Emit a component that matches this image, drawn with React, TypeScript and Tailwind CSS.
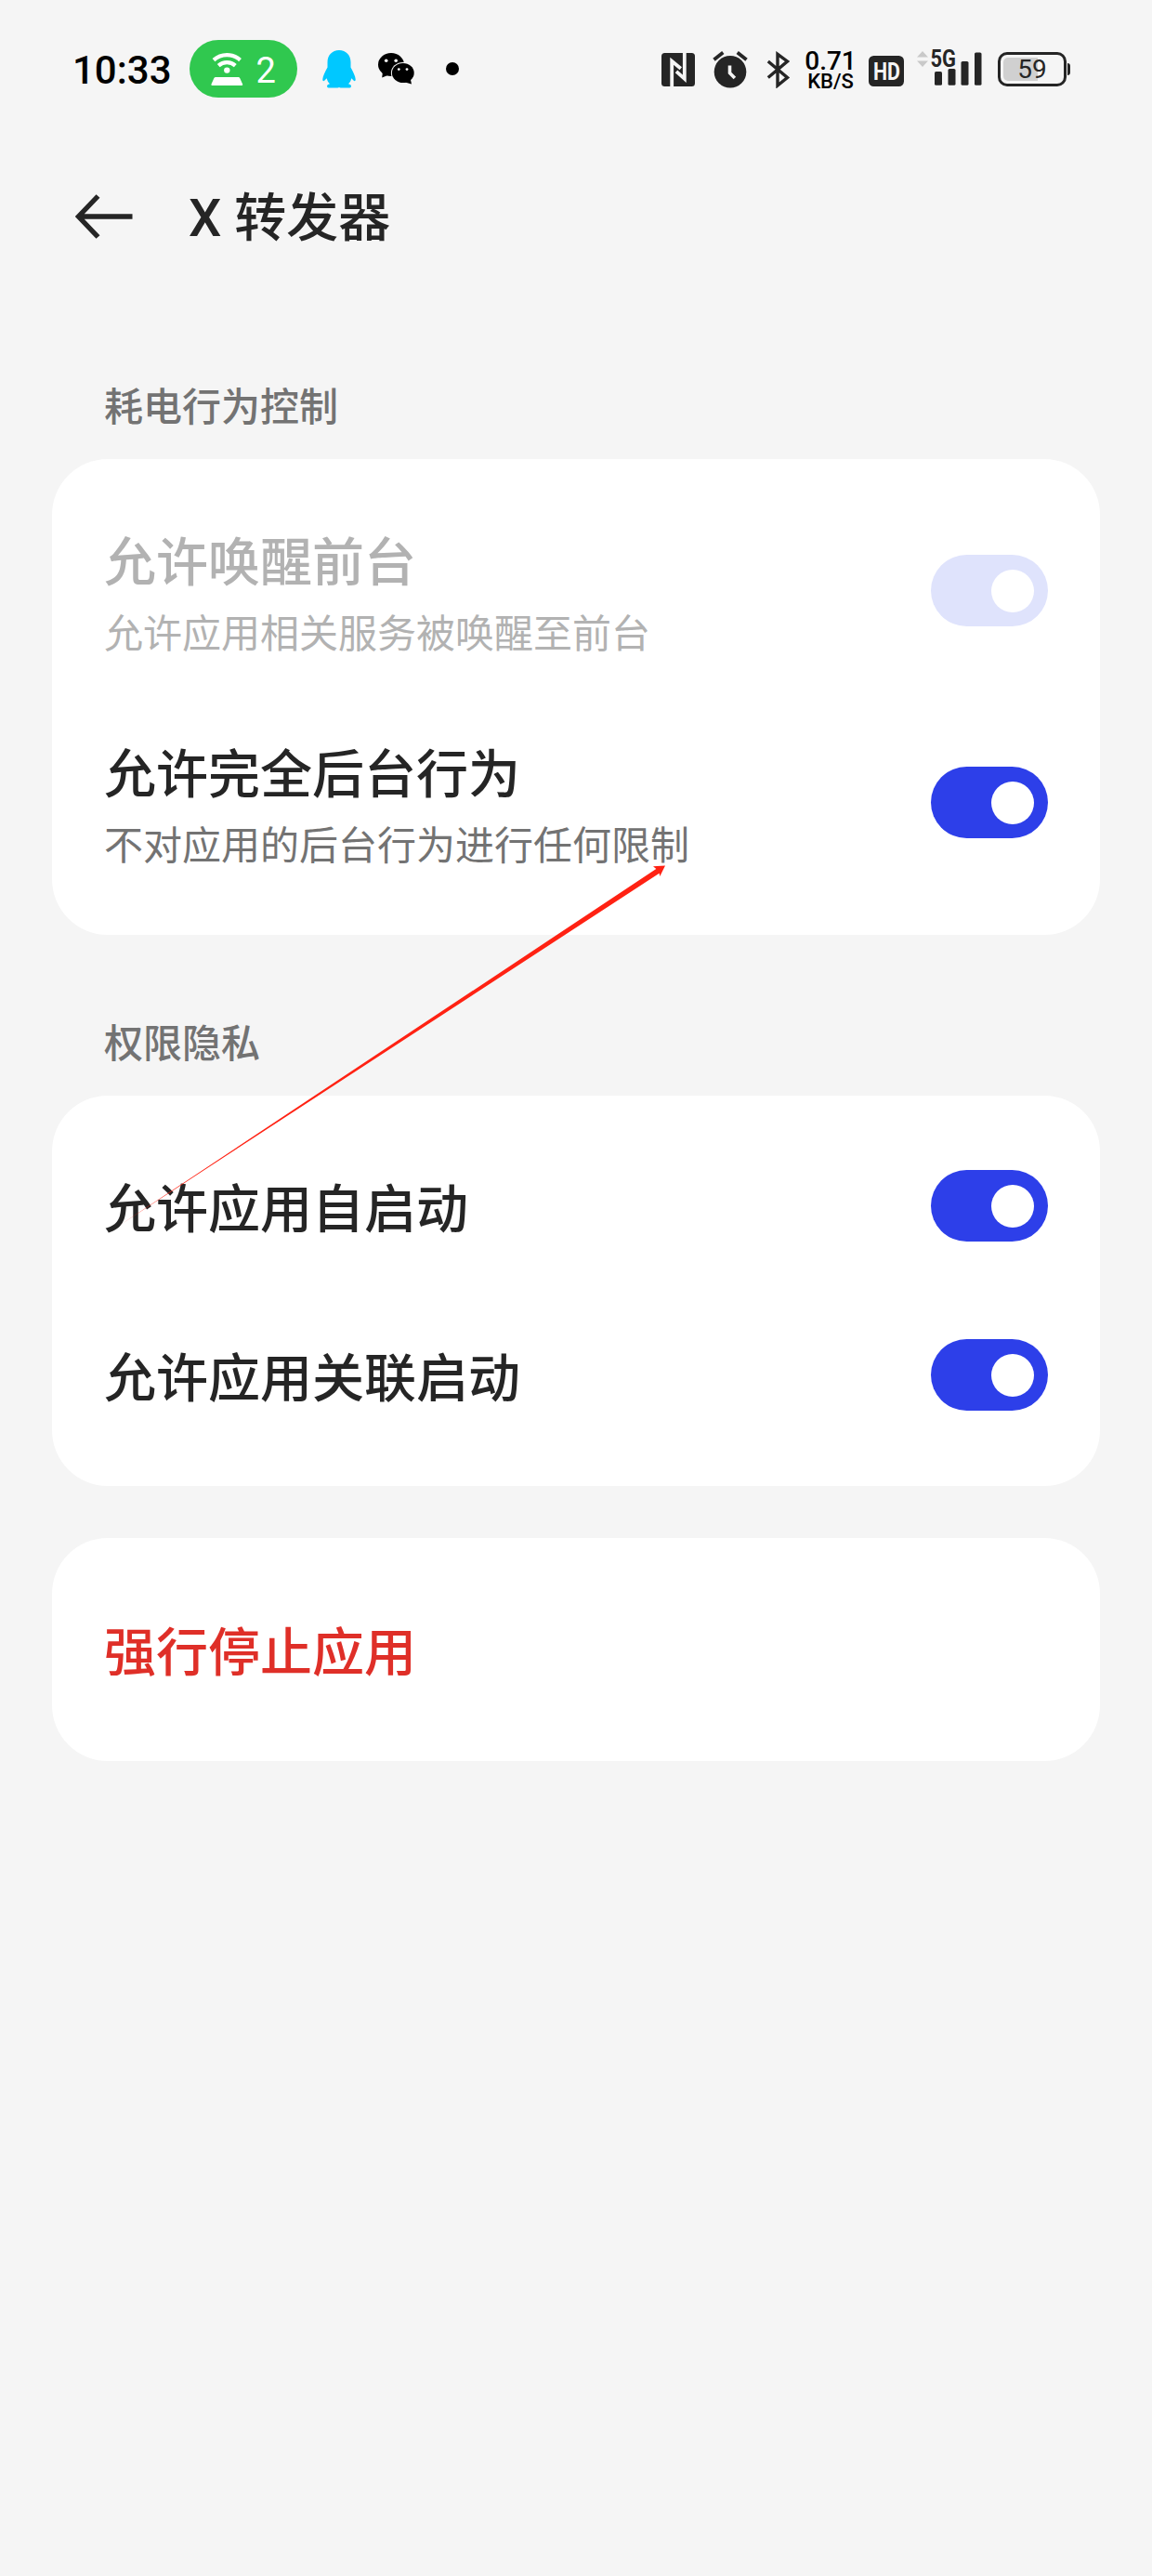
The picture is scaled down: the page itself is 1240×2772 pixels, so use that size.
import { useState } from "react";

type SettingItem = {
  id: string;
  title: string;
  desc?: string;
  disabled?: boolean;
};

const powerItems: SettingItem[] = [
  { id: "wake", title: "允许唤醒前台", desc: "允许应用相关服务被唤醒至前台", disabled: true },
  { id: "background", title: "允许完全后台行为", desc: "不对应用的后台行为进行任何限制" },
];

const privacyItems: SettingItem[] = [
  { id: "autostart", title: "允许应用自启动" },
  { id: "linked", title: "允许应用关联启动" },
];

function HotspotPill() {
  return (
    <div className="ml-[19px] flex h-[62px] w-[116px] items-center rounded-full bg-[#30c84f] pl-[23px] text-white">
      <svg width="35" height="38" viewBox="0 0 35 38" className="shrink-0">
        <g fill="none" stroke="white" strokeWidth="4.2">
          <path d="M3 9.6A21 21 0 0 1 31.5 9.6" />
          <path d="M8.2 15.6A13.5 13.5 0 0 1 26.3 15.6" />
        </g>
        <circle cx="17.3" cy="20.6" r="3.2" fill="white" />
        <path d="M5.2 28h24.2q1.4 0 1.900 1.200l2.800 6.400q.5 1.400-1 1.400H1.500q-1.500 0-1-1.400l2.800-6.400Q3.800 28 5.200 28z" fill="white" />
      </svg>
      <span className="ml-[14px] pt-[3px] text-[38px] leading-none">2</span>
    </div>
  );
}

function QQIcon() {
  return (
    <svg width="36" height="41" viewBox="0 0 36 41" className="ml-[27px]" fill="#00c8ff">
      <path d="M18 0C25.500 0 30.500 5.500 30.500 13v5.500c2.600 4.600 5 9.500 5.200 12.800.1 2-.9 2.600-2.200 1.300l-2.200-2.300c-.6 2.600-1.700 4.500-3.300 6 2 .6 3 1.300 3 2.500 0 1.400-1 1.700-3 1.700H19.500L18 40l-1.500.5H8c-2 0-3-.3-3-1.700 0-1.200 1-1.900 3-2.500-1.600-1.500-2.700-3.400-3.300-6l-2.200 2.300C1.200 33.900.2 33.300.3 31.300c.2-3.300 2.600-8.200 5.200-12.800V13C5.500 5.500 10.500 0 18 0z" />
    </svg>
  );
}

function WeChatIcon() {
  return (
    <svg width="40" height="34" viewBox="0 0 40 34" className="ml-6">
      <ellipse cx="14" cy="12.500" rx="14" ry="12.500" />
      <path d="M5 20l-.8 6.500 7.500-3z" />
      <circle cx="8.700" cy="8.300" r="1.800" fill="#f5f5f5" />
      <circle cx="19.200" cy="8.300" r="1.800" fill="#f5f5f5" />
      <ellipse cx="26.800" cy="21.500" rx="12.900" ry="11.500" fill="#f5f5f5" />
      <ellipse cx="26.800" cy="21.500" rx="11.900" ry="10.500" />
      <path d="M29 31.500l7 2-1.200-5.500z" />
      <circle cx="22.300" cy="17.600" r="1.400" fill="#f5f5f5" />
      <circle cx="31" cy="17.600" r="1.400" fill="#f5f5f5" />
    </svg>
  );
}

function NfcIcon() {
  return (
    <svg width="36" height="36" viewBox="0 0 36 36" className="mt-[2px]">
      <rect width="36" height="36" rx="3.500" fill="#252525" />
      <g fill="none" stroke="#f5f5f5" strokeWidth="3.800">
        <path d="M11.200 36V8.800l9.600 8" />
        <path d="M24.800 0V27.800l-8.800-8" />
      </g>
    </svg>
  );
}

function AlarmIcon() {
  return (
    <svg width="38" height="40" viewBox="0 0 38 40" className="mt-[2px] ml-[19px]">
      <circle cx="19" cy="22.300" r="17.300" fill="#252525" />
      <g fill="none" stroke="#252525" strokeWidth="3.800">
        <path d="M1.500 9.200L11.300 1.600" />
        <path d="M26.700 1.600L36.500 9.200" />
      </g>
      <path d="M18.500 15.500v8l5.400 5.400" fill="none" stroke="#f5f5f5" strokeWidth="3.600" />
    </svg>
  );
}

function BluetoothIcon() {
  return (
    <svg width="26" height="40" viewBox="0 0 26 40" className="mt-[2px] ml-5" fill="none" stroke="#252525" strokeWidth="3.400">
      <path d="M1.800 11L22.500 28.500 12 37V3.300l10.500 7.700L1.800 28.500" />
    </svg>
  );
}

function HdIcon() {
  return (
    <svg width="38" height="33" viewBox="0 0 38 33" className="mt-1 ml-[15px] overflow-visible">
      <rect width="38" height="33" rx="5.500" fill="#252525" />
      <text x="5" y="25.500" textLength="29" lengthAdjust="spacingAndGlyphs" fill="#f5f5f5" className="text-[26px] font-bold">
        HD
      </text>
    </svg>
  );
}

function SignalIcon() {
  return (
    <svg width="71" height="40" viewBox="0 0 71 40" className="ml-[13px] overflow-visible" fill="#252525">
      <path d="M7 1l6 6.500H1zM7 18l6-6.500H1z" fill="#c9c9c9" />
      <text x="15.500" y="18" textLength="27.500" lengthAdjust="spacingAndGlyphs" className="text-[25px] font-bold">
        5G
      </text>
      <rect x="20" y="23" width="8" height="14.800" rx="1.600" />
      <rect x="34.500" y="20" width="8" height="17.800" rx="1.600" />
      <rect x="48.500" y="12" width="8" height="25.800" rx="1.600" />
      <rect x="63" y="2.500" width="7.500" height="35.300" rx="1.600" />
    </svg>
  );
}

function Battery() {
  return (
    <div className="ml-[17px] flex items-center">
      <div className="relative flex h-[37px] w-[74px] items-center justify-center rounded-[10px] border-[3px] border-[#252525]">
        <div className="absolute top-[3px] left-[3px] h-[25px] w-[37px] rounded-l-[5px] bg-[#d0d0d0]" />
        <span className="relative pt-[2px] text-[28px] leading-none">59</span>
      </div>
      <div className="ml-px h-[13px] w-[3px] rounded-r-full bg-[#252525]" />
    </div>
  );
}

function StatusBar() {
  return (
    <div className="flex h-[148px] items-center pr-[88px] pl-[78px] font-[Roboto,sans-serif] text-[#252525]">
      <span className="pt-1 text-[42px] leading-none font-medium text-black">10:33</span>
      <HotspotPill />
      <QQIcon />
      <WeChatIcon />
      <div className="ml-[33px] h-[14px] w-[14px] rounded-full bg-black" />

      <div className="ml-auto flex items-center">
        <NfcIcon />
        <AlarmIcon />
        <BluetoothIcon />
        <div className="ml-[17px] flex w-[52px] flex-col items-center pt-[2px] font-medium whitespace-nowrap text-black">
          <span className="text-[28px] leading-[24px]">0.71</span>
          <span className="text-[22px] leading-[19px]">KB/S</span>
        </div>
        <HdIcon />
        <SignalIcon />
        <Battery />
      </div>
    </div>
  );
}

function Toggle({ on, disabled, onClick }: { on: boolean; disabled?: boolean; onClick: () => void }) {
  const track = disabled ? "bg-[#dfe3fc]" : on ? "bg-[#2d3fe9]" : "bg-[#d9d9d9]";

  return (
    <button
      role="switch"
      aria-checked={on}
      disabled={disabled}
      onClick={onClick}
      className={`mb-px flex h-[77px] w-[126px] shrink-0 items-center rounded-full px-[15px] ${on ? "justify-end" : "justify-start"} ${track}`}
    >
      <span className="h-[46px] w-[46px] rounded-full bg-white" />
    </button>
  );
}

export default function App() {
  const [enabled, setEnabled] = useState<Record<string, boolean>>({
    wake: true,
    background: true,
    autostart: true,
    linked: true,
  });

  const toggle = (id: string) => setEnabled({ ...enabled, [id]: !enabled[id] });

  const renderItem = (item: SettingItem) => (
    <div key={item.id} className={`flex items-center justify-between ${item.desc ? "h-[228px]" : "h-[182px]"}`}>
      <div className={`pb-[2px] ${item.disabled ? "text-[#b2b2b2]" : "text-[#252525]"}`}>
        <div className="text-[56px] leading-[86px] font-medium">{item.title}</div>
        {item.desc && (
          <div className={`text-[42px] leading-[69px] ${item.disabled ? "" : "text-[#737373]"}`}>{item.desc}</div>
        )}
      </div>
      <Toggle on={enabled[item.id]} disabled={item.disabled} onClick={() => toggle(item.id)} />
    </div>
  );

  return (
    <main className="relative h-[2772px] w-[1240px] overflow-hidden bg-[#f5f5f5] font-['Noto_Sans_CJK_SC',sans-serif]">
      <StatusBar />

      <header className="flex h-[170px] items-center pl-[80px] text-[#252525]">
        <svg width="64" height="48" viewBox="0 0 64 48" fill="none" stroke="currentColor" strokeWidth="5.400">
          <path d="M25.500 2L4.500 24l21 22M4.500 24h58" />
        </svg>
        <h1 className="ml-[59px] pt-[3px] font-[Roboto,'Noto_Sans_CJK_SC',sans-serif] text-[56px] leading-[80px] font-medium">X 转发器</h1>
      </header>

      <section className="px-14 pt-[82px]">
        <h2 className="px-14 text-[42px] leading-[70px] font-medium text-[#737373]">耗电行为控制</h2>
        <div className="mt-6 rounded-[60px] bg-white px-14 py-7">{powerItems.map(renderItem)}</div>
      </section>

      <section className="px-14 pt-[79px]">
        <h2 className="px-14 text-[42px] leading-[70px] font-medium text-[#737373]">权限隐私</h2>
        <div className="mt-6 rounded-[60px] bg-white px-14 py-7">{privacyItems.map(renderItem)}</div>
      </section>

      <section className="px-14 pt-14">
        <button className="flex h-[240px] w-full items-center rounded-[60px] bg-white px-14 pb-[2px] text-[56px] font-medium text-[#df2f28]">
          强行停止应用
        </button>
      </section>

      {/* hand-drawn pointer between the two settings */}
      <svg className="pointer-events-none absolute top-[920px] left-[120px]" width="610" height="410" viewBox="120 920 610 410">
        <path d="M128 1319L706.300 935 703 932.300 716 931.500 710.300 943 709.600 939.800z" fill="#ff2213" />
      </svg>
    </main>
  );
}
